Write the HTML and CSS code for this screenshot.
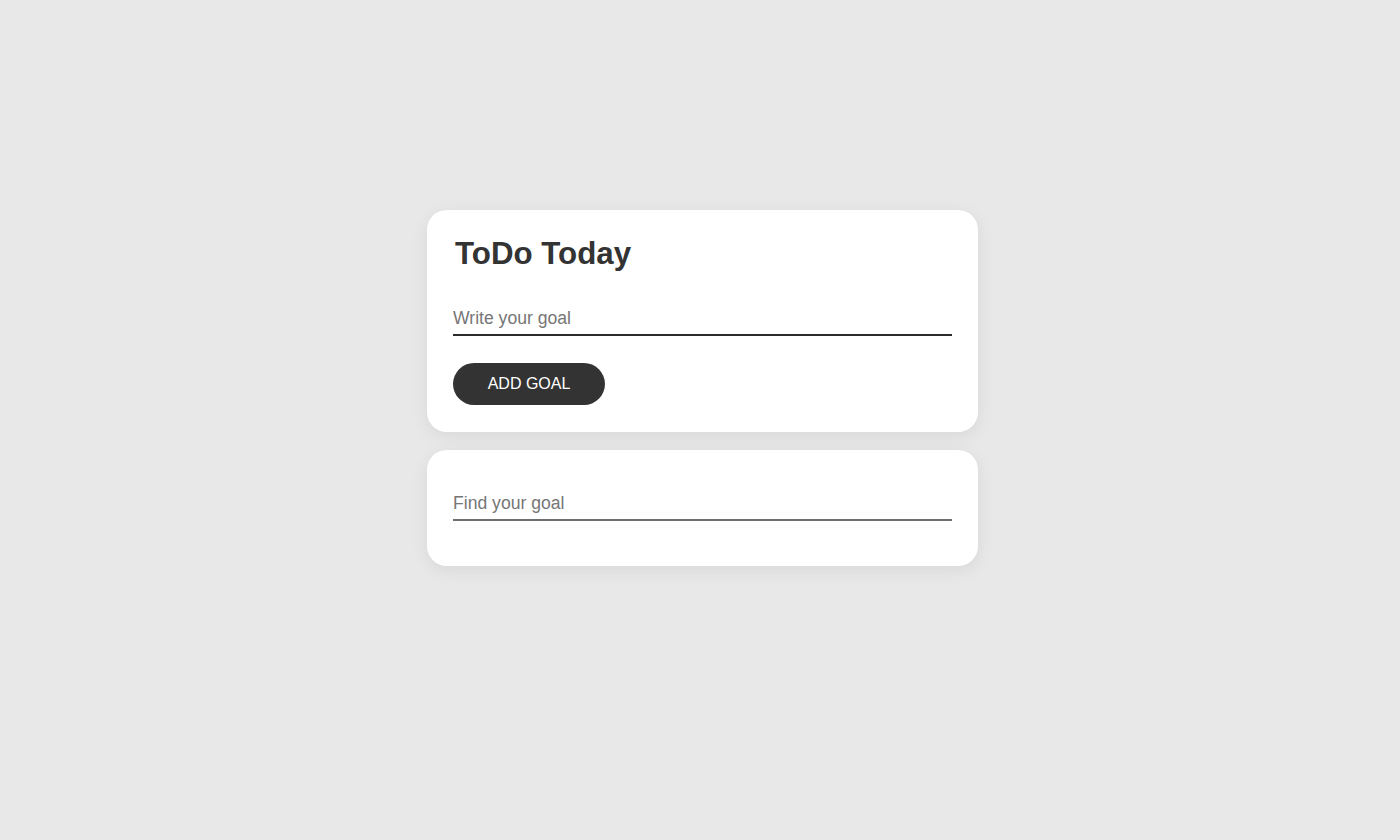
FILE: index.html
```html
<!DOCTYPE html>
<html lang="en">
<head>
<meta charset="utf-8">
<title>ToDo Today</title>
<link rel="stylesheet" href="styles.css">
</head>
<body>
<main class="container">
  <section class="card card-add">
    <h1 class="title">ToDo Today</h1>
    <input class="goal-input" type="text" placeholder="Write your goal">
    <button class="add-btn" type="button">ADD GOAL</button>
  </section>
  <section class="card card-find">
    <input class="find-input" type="text" placeholder="Find your goal">
  </section>
</main>
</body>
</html>
```
FILE: styles.css
```css
html, body {
  margin: 0;
  padding: 0;
}
body {
  background: #e8e8e8;
  font-family: "Liberation Sans", Arial, sans-serif;
  color: #333;
  min-height: 840px;
  padding-left: 5px;
  box-sizing: border-box;
}
.container {
  width: 551px;
  margin: 0 auto;
  padding-top: 210px;
  display: flex;
  flex-direction: column;
  gap: 18px;
}
.card {
  background: #fff;
  border-radius: 20px;
  box-shadow: 0 4px 18px rgba(0, 0, 0, 0.07);
  padding: 26px 26px 27px;
  display: flex;
  flex-direction: column;
  align-items: flex-start;
}
.title {
  margin: 0 0 30px 2px;
  font-size: 31.3px;
  font-weight: bold;
  line-height: 35px;
  color: #333;
}
.goal-input,
.find-input {
  display: block;
  width: 100%;
  box-sizing: border-box;
  border: none;
  border-bottom: 2px solid #2b2b2b;
  outline: none;
  padding: 8px 0 6px;
  font-family: "Liberation Sans", Arial, sans-serif;
  font-size: 17.6px;
  line-height: 20px;
  height: 36px;
  color: #333;
  background: transparent;
}
.goal-input {
  margin-top: -1px;
}
.goal-input::placeholder,
.find-input::placeholder {
  color: #767676;
}
.find-input {
  border-bottom-color: #6e6e6e;
  margin: 9px 0 18px;
}
.add-btn {
  margin-top: 27px;
  width: 152px;
  height: 42px;
  border: none;
  border-radius: 21px;
  background: #333;
  color: #fff;
  font-family: "Liberation Sans", Arial, sans-serif;
  font-size: 16px;
  padding: 0;
  cursor: pointer;
}
```
